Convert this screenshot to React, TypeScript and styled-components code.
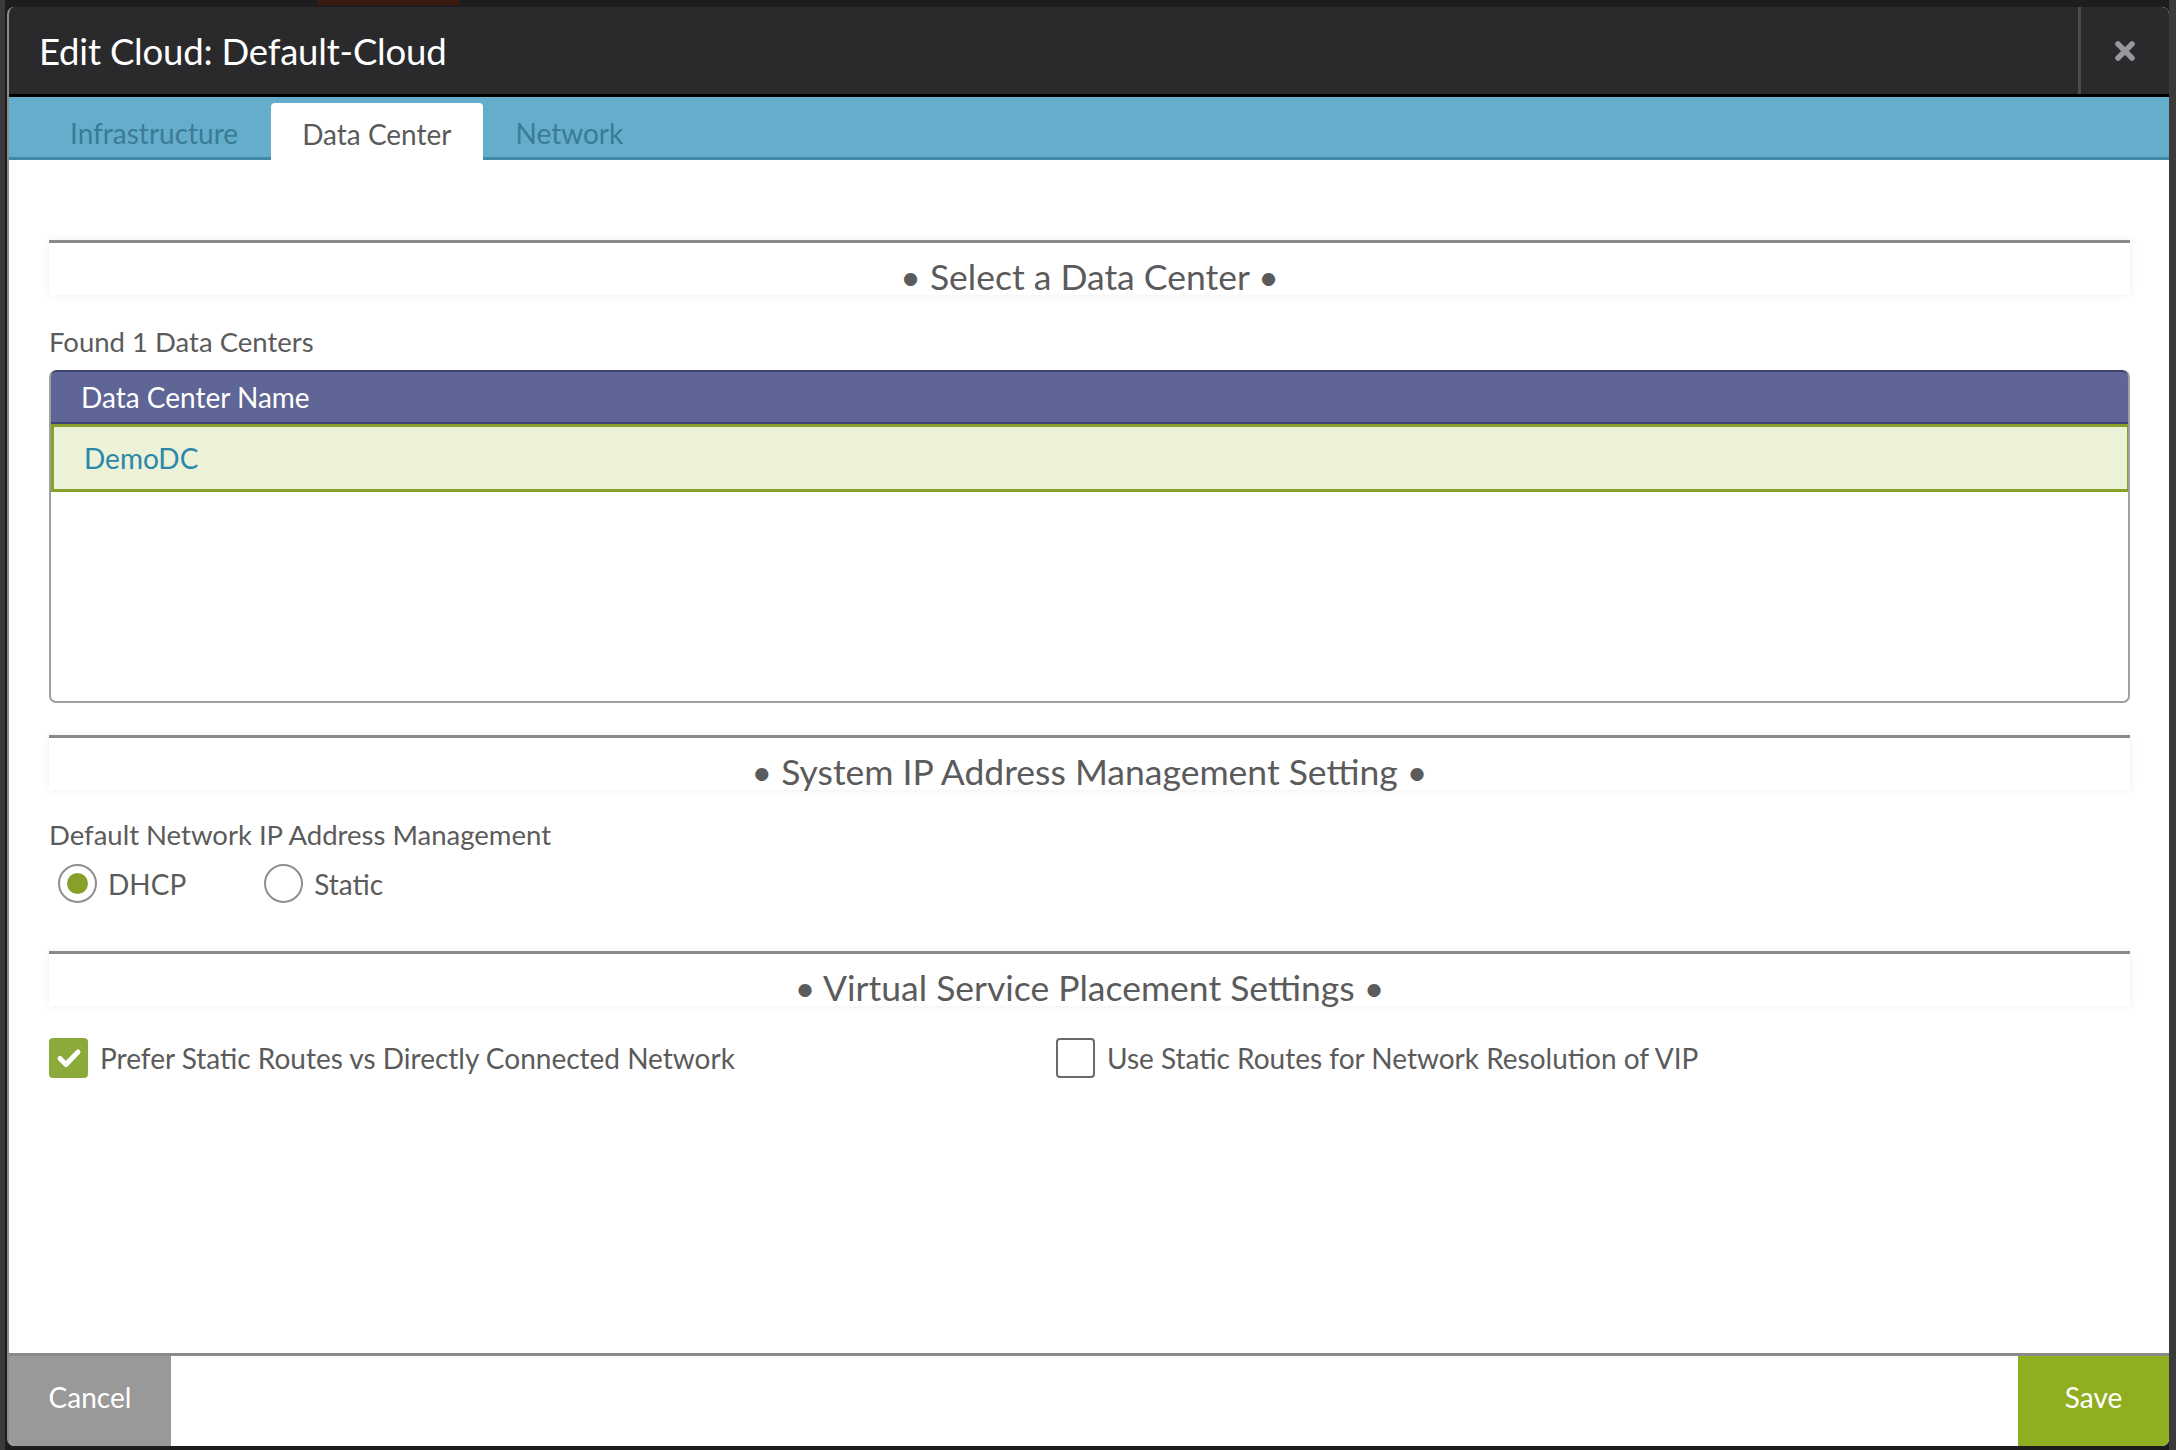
import React from "react";
import styled, { createGlobalStyle } from "styled-components";

const GlobalStyle = createGlobalStyle`
  html, body { margin: 0; padding: 0; }
  body {
    background: #1b1b1b;
    font-family: Lato, "Open Sans", "Liberation Sans", sans-serif;
    -webkit-font-smoothing: antialiased;
  }
  * { box-sizing: border-box; }
`;

const Page = styled.div`
  width: 2176px;
  height: 1450px;
  padding: 7px 7px 4px 7px;
  background: linear-gradient(to right, #3a3a3a 0, #3a3a3a 5px, #1d1d1d 5px, #1d1d1d 2169px, #3a3a3a 2169px);
  position: relative;
  overflow: hidden;
`;

const TopGlow = styled.div`
  position: absolute;
  top: 0;
  left: 318px;
  width: 142px;
  height: 5px;
  background: #3b1b10;
`;

const Modal = styled.div`
  height: 100%;
  display: flex;
  flex-direction: column;
  background: #fff;
  border-radius: 7px;
  overflow: hidden;
  border-left: 2px solid #8c8c8c;
`;

const Header = styled.div`
  display: flex;
  align-items: stretch;
  height: 90px;
  background: #2a2a2c;
  border-bottom: 3px solid #000;
  flex-shrink: 0;
`;

const Title = styled.h1`
  flex: 1;
  margin: 0;
  padding-left: 30px;
  display: flex;
  align-items: center;
  color: #fff;
  font-size: 36.5px;
  font-weight: 400;
  letter-spacing: -0.2px;
`;

const CloseBox = styled.div`
  width: 91px;
  border-left: 3px solid #4b4b4d;
  display: flex;
  align-items: center;
  justify-content: center;
`;

const TabBar = styled.div`
  display: flex;
  align-items: flex-end;
  gap: 2px;
  height: 63px;
  padding-left: 30px;
  background: #65aecb;
  border-bottom: 3px solid #3f89a7;
  flex-shrink: 0;
`;

const Tab = styled.div<{ $active?: boolean }>`
  height: ${(p) => (p.$active ? "57px" : "54px")};
  margin-bottom: ${(p) => (p.$active ? "-3px" : "0")};
  padding: 5px 31px 0;
  display: flex;
  align-items: center;
  font-size: 28px;
  color: ${(p) => (p.$active ? "#5a5a5a" : "#3a7b96")};
  background: ${(p) => (p.$active ? "#fff" : "transparent")};
  border-radius: 4px 4px 0 0;
`;

const Body = styled.div`
  flex: 1;
  padding: 80px 39px 0 40px;
  display: flex;
  flex-direction: column;
  color: #5b5b5b;
`;

const SectionHead = styled.div<{ $mt?: number }>`
  margin-top: ${(p) => p.$mt ?? 0}px;
  height: 55px;
  border-top: 3px solid #8a8a8a;
  box-shadow: 0 0 8px rgba(0, 0, 0, 0.07);
  display: flex;
  align-items: center;
  justify-content: center;
  font-size: 35.5px;
  color: #5b5b5b;
  padding-top: 14px;
`;

const Label = styled.div<{ $mt: number }>`
  margin-top: ${(p) => p.$mt}px;
  font-size: 27.5px;
  line-height: 30px;
  color: #5b5b5b;
`;

const Table = styled.div`
  margin-top: 13px;
  height: 333px;
  border: 2px solid #9ca0a0;
  border-top: none;
  border-radius: 7px;
  overflow: hidden;
  display: flex;
  flex-direction: column;
`;

const TableHead = styled.div`
  height: 54px;
  background: #5f6594;
  border: 2px solid #3e4570;
  border-radius: 7px 7px 0 0;
  margin: 0 -2px;
  display: flex;
  align-items: center;
  padding-left: 30px;
  color: #fff;
  font-size: 28px;
`;

const Row = styled.div<{ $selected?: boolean }>`
  height: 68px;
  margin: 0 -2px 0 0;
  background: ${(p) => (p.$selected ? "#ebf2d7" : "#fff")};
  border: 3px solid ${(p) => (p.$selected ? "#86a02a" : "transparent")};
  display: flex;
  align-items: center;
  padding-left: 30px;
  color: #2b87a9;
  font-size: 28px;
`;

const RadioGroup = styled.div`
  margin-top: 14px;
  display: flex;
  align-items: center;
  gap: 78px;
  padding-left: 9px;
`;

const RadioOption = styled.label`
  display: flex;
  align-items: center;
  gap: 11px;
  font-size: 28px;
  color: #5b5b5b;
`;

const RadioCircle = styled.span<{ $checked?: boolean }>`
  width: 39px;
  height: 39px;
  border-radius: 50%;
  border: 2px solid #8f8f8f;
  display: flex;
  align-items: center;
  justify-content: center;
  &::after {
    content: "";
    width: 21px;
    height: 21px;
    border-radius: 50%;
    background: ${(p) => (p.$checked ? "#86a02a" : "transparent")};
  }
`;

const CheckRow = styled.div`
  margin-top: 32px;
  display: grid;
  grid-template-columns: 1007px 1fr;
  align-items: center;
`;

const CheckOption = styled.label`
  display: flex;
  align-items: center;
  gap: 12px;
  font-size: 28px;
  color: #5b5b5b;
`;

const CheckBox = styled.span<{ $checked?: boolean }>`
  width: 39px;
  height: 40px;
  border-radius: 4px;
  border: 2px solid ${(p) => (p.$checked ? "#8aab3a" : "#6a6a6a")};
  background: ${(p) => (p.$checked ? "#8aab3a" : "#fff")};
  display: flex;
  align-items: center;
  justify-content: center;
`;

const Footer = styled.div`
  height: 93px;
  border-top: 3px solid #8a8a8a;
  display: flex;
  justify-content: space-between;
  flex-shrink: 0;
`;

const FooterButton = styled.button<{ $variant: "cancel" | "save" }>`
  border: none;
  margin: 0;
  width: ${(p) => (p.$variant === "cancel" ? "162px" : "151px")};
  background: ${(p) => (p.$variant === "cancel" ? "#999999" : "#8fae20")};
  color: #fff;
  font-family: inherit;
  font-size: 28px;
  display: flex;
  align-items: center;
  justify-content: center;
  padding-bottom: 9px;
`;

const CloseIcon = () => (
  <svg width="22" height="22" viewBox="0 0 22 22">
    <path d="M4 4 L18 18 M18 4 L4 18" stroke="#98989c" strokeWidth="5.5" strokeLinecap="round" />
  </svg>
);

const CheckIcon = () => (
  <svg width="26" height="22" viewBox="0 0 26 22">
    <path d="M4 11.5 L10 17.5 L22 5" stroke="#fff" strokeWidth="5" fill="none" strokeLinecap="round" strokeLinejoin="round" />
  </svg>
);

export default function App() {
  return (
    <>
      <GlobalStyle />
      <Page>
        <TopGlow />
        <Modal>
          <Header>
            <Title>Edit Cloud: Default-Cloud</Title>
            <CloseBox>
              <CloseIcon />
            </CloseBox>
          </Header>
          <TabBar>
            <Tab>Infrastructure</Tab>
            <Tab $active>Data Center</Tab>
            <Tab>Network</Tab>
          </TabBar>
          <Body>
            <SectionHead>• Select a Data Center •</SectionHead>
            <Label $mt={32}>Found 1 Data Centers</Label>
            <Table>
              <TableHead>Data Center Name</TableHead>
              <Row $selected>DemoDC</Row>
            </Table>
            <SectionHead $mt={32}>• System IP Address Management Setting •</SectionHead>
            <Label $mt={30}>Default Network IP Address Management</Label>
            <RadioGroup>
              <RadioOption>
                <RadioCircle $checked />
                DHCP
              </RadioOption>
              <RadioOption>
                <RadioCircle />
                Static
              </RadioOption>
            </RadioGroup>
            <SectionHead $mt={48}>• Virtual Service Placement Settings •</SectionHead>
            <CheckRow>
              <CheckOption>
                <CheckBox $checked>
                  <CheckIcon />
                </CheckBox>
                Prefer Static Routes vs Directly Connected Network
              </CheckOption>
              <CheckOption>
                <CheckBox />
                Use Static Routes for Network Resolution of VIP
              </CheckOption>
            </CheckRow>
          </Body>
          <Footer>
            <FooterButton $variant="cancel">Cancel</FooterButton>
            <FooterButton $variant="save">Save</FooterButton>
          </Footer>
        </Modal>
      </Page>
    </>
  );
}
